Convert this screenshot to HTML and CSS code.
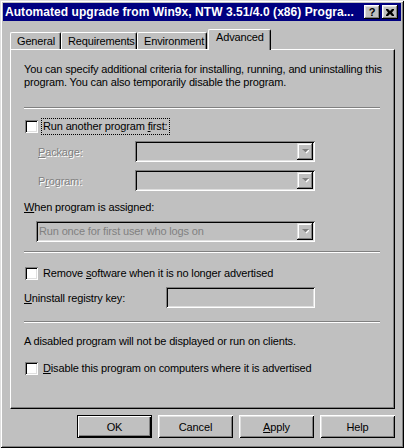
FILE: index.html
```html
<!DOCTYPE html>
<html>
<head>
<meta charset="utf-8">
<link rel="stylesheet" href="styles.css">
</head>
<body>
<div class="window">
  <div class="titlebar">
    <span class="title">Automated upgrade from Win9x, NTW 3.51/4.0 (x86) Progra...</span>
    <div class="tbtns">
      <span class="tbtn help">?</span>
      <span class="tbtn close"><svg width="8" height="7" viewBox="0 0 8 7"><path d="M0 0h2l2 2 2-2h2v1L6 3.5 8 6v1H6L4 5 2 7H0V6l2-2.5L0 1z" fill="#000"/></svg></span>
    </div>
  </div>
  <div class="tabs">
    <div class="tab t-general">General</div>
    <div class="tab t-req">Requirements</div>
    <div class="tab t-env">Environment</div>
    <div class="tab t-adv selected">Advanced</div>
  </div>
  <div class="panel">
    <p class="intro">You can specify additional criteria for installing, running, and uninstalling this<br>program. You can also temporarily disable the program.</p>
    <div class="sep s1"></div>
    <div class="check r-run"><span class="box"></span><span class="lab focus">Run another program <u>f</u>irst:</span></div>
    <div class="field f-pkg">
      <span class="lbl disabled"><u>P</u>ackage:</span>
      <div class="combo"><span class="val"></span><span class="drop"><svg width="7" height="5" viewBox="0 0 7 5"><path d="M1 1h7L4.5 4.5z" fill="#fff"/><path d="M0 0h7L3.5 3.5z" fill="#808080"/></svg></span></div>
    </div>
    <div class="field f-prog">
      <span class="lbl disabled">P<u>r</u>ogram:</span>
      <div class="combo"><span class="val"></span><span class="drop"><svg width="7" height="5" viewBox="0 0 7 5"><path d="M1 1h7L4.5 4.5z" fill="#fff"/><path d="M0 0h7L3.5 3.5z" fill="#808080"/></svg></span></div>
    </div>
    <div class="when-lbl"><u>W</u>hen program is assigned:</div>
    <div class="combo wide"><span class="val gray">Run once for first user who logs on</span><span class="drop"><svg width="7" height="5" viewBox="0 0 7 5"><path d="M1 1h7L4.5 4.5z" fill="#fff"/><path d="M0 0h7L3.5 3.5z" fill="#808080"/></svg></span></div>
    <div class="sep s2"></div>
    <div class="check r-remove"><span class="box"></span><span class="lab">Remove <u>s</u>oftware when it is no longer advertised</span></div>
    <div class="field f-uninst">
      <span class="lbl"><u>U</u>ninstall registry key:</span>
      <div class="textbox"></div>
    </div>
    <div class="sep s3"></div>
    <p class="note">A disabled program will not be displayed or run on clients.</p>
    <div class="check r-disable"><span class="box"></span><span class="lab"><u>D</u>isable this program on computers where it is advertised</span></div>
  </div>
  <div class="buttons">
    <div class="btn default">OK</div>
    <div class="btn">Cancel</div>
    <div class="btn"><u>A</u>pply</div>
    <div class="btn">Help</div>
  </div>
</div>
</body>
</html>
```
FILE: styles.css
```css
* { box-sizing: border-box; }
html, body { margin: 0; padding: 0; }
body {
  width: 404px;
  height: 448px;
  overflow: hidden;
  background: #c0c0c0;
  font-family: "Liberation Sans", Arial, sans-serif;
  font-size: 11px;
  letter-spacing: -0.15px;
  color: #000;
}
u { text-decoration: underline; text-underline-offset: 1px; }

.window {
  width: 404px;
  height: 448px;
  padding: 3px;
  display: flex;
  flex-direction: column;
  box-shadow: inset 1px 1px #dfdfdf, inset -1px -1px #000, inset 2px 2px #fff, inset -2px -2px #808080;
}

.titlebar {
  height: 18px;
  background: #000080;
  color: #fff;
  display: flex;
  align-items: center;
  justify-content: space-between;
  padding: 0 3px 0 2px;
}
.title {
  font-weight: bold;
  font-size: 12px;
  letter-spacing: 0.05px;
  white-space: nowrap;
}
.tbtns { display: flex; gap: 2px; }
.tbtn {
  width: 16px;
  height: 14px;
  background: #c0c0c0;
  color: #000;
  display: flex;
  align-items: center;
  justify-content: center;
  box-shadow: inset -1px -1px #000, inset 1px 1px #fff, inset -2px -2px #808080, inset 2px 2px #dfdfdf;
}
.tbtn.help { font-weight: bold; font-size: 11px; line-height: 14px; padding-bottom: 1px; letter-spacing: 0; }

.tabs {
  display: flex;
  align-items: flex-end;
  margin: 8px 0 0 7px;
  height: 20px;
}
.tab {
  height: 17px;
  background: #c0c0c0;
  border-top: 1px solid #fff;
  border-left: 1px solid #fff;
  border-right: 1px solid #000;
  border-radius: 2px 2px 0 0;
  box-shadow: inset -1px 0 #808080;
  padding: 2px 0 0 6px;
  white-space: nowrap;
  line-height: 13px;
}
.t-general { width: 51px; }
.t-req { width: 76px; }
.t-env { width: 70px; }
.t-adv { width: 63px; margin-left: 1px; }
.tab.selected {
  height: 21px;
  margin-bottom: -1px;
  position: relative;
  z-index: 1;
  padding-top: 1px;
  padding-left: 7px;
}

.panel {
  margin-left: 7px;
  width: 385px;
  height: 360px;
  border: 1px solid;
  border-color: #fff #000 #000 #fff;
  box-shadow: inset -1px -1px #808080;
  padding: 13px 14px 0 13px;
  display: flex;
  flex-direction: column;
  align-items: flex-start;
}
.intro, .note {
  margin: 0;
  line-height: 13px;
  white-space: nowrap;
}
.sep {
  align-self: stretch;
  height: 2px;
  border-top: 1px solid #808080;
  border-bottom: 1px solid #fff;
}
.s1 { margin-top: 18px; }
.s2 { margin-top: 9px; }
.s3 { margin-top: 13px; }

.check {
  display: flex;
  align-items: center;
  height: 17px;
  margin-left: 1px;
}
.box {
  width: 13px;
  height: 13px;
  background: #fff;
  box-shadow: inset 1px 1px #808080, inset -1px -1px #fff, inset 2px 2px #000, inset -2px -2px #dfdfdf;
}
.lab {
  margin-left: 3px;
  padding: 0 1px;
  line-height: 15px;
  white-space: nowrap;
  border: 1px solid transparent;
}
.lab.focus { border: 1px dotted #000; }
.r-run { margin-top: 9px; }
.r-remove { margin-top: 12px; }
.r-disable { margin-top: 12px; }

.field {
  display: grid;
  align-items: center;
  height: 21px;
}
.f-pkg, .f-prog { grid-template-columns: 97px 180px; margin-left: 14px; }
.f-pkg { margin-top: 6px; }
.f-prog { margin-top: 8px; }
.f-uninst { grid-template-columns: 142px 149px; margin-top: 5px; }

.lbl { white-space: nowrap; }
.disabled { color: #808080; text-shadow: 1px 1px 0 #fff; }

.combo {
  height: 21px;
  display: flex;
  padding: 2px;
  background: #c0c0c0;
  box-shadow: inset 1px 1px #808080, inset -1px -1px #fff, inset 2px 2px #000, inset -2px -2px #dfdfdf;
}
.combo .val {
  flex: 1;
  padding-left: 1px;
  line-height: 17px;
  white-space: nowrap;
  overflow: hidden;
}
.val.gray { color: #808080; }
.drop {
  width: 16px;
  height: 17px;
  display: flex;
  align-items: center;
  justify-content: center;
  box-shadow: inset -1px -1px #000, inset 1px 1px #dfdfdf, inset -2px -2px #808080, inset 2px 2px #fff;
}
.when-lbl { margin-top: 10px; line-height: 13px; }
.combo.wide { width: 279px; margin: 7px 0 0 12px; }

.textbox {
  height: 21px;
  background: #c0c0c0;
  box-shadow: inset 1px 1px #808080, inset -1px -1px #fff, inset 2px 2px #000, inset -2px -2px #dfdfdf;
}
.note { margin-top: 12px; }

.buttons {
  margin: 6px 0 0 7px;
  width: 385px;
  display: flex;
  justify-content: flex-end;
  gap: 6px;
}
.btn {
  width: 75px;
  height: 23px;
  display: flex;
  align-items: center;
  justify-content: center;
  box-shadow: inset 1px 1px #fff, inset -1px -1px #000, inset 2px 2px #dfdfdf, inset -2px -2px #808080;
}
.btn.default {
  border: 1px solid #000;
  box-shadow: inset 1px 1px #fff, inset -1px -1px #000, inset -2px -2px #808080;
}
```
